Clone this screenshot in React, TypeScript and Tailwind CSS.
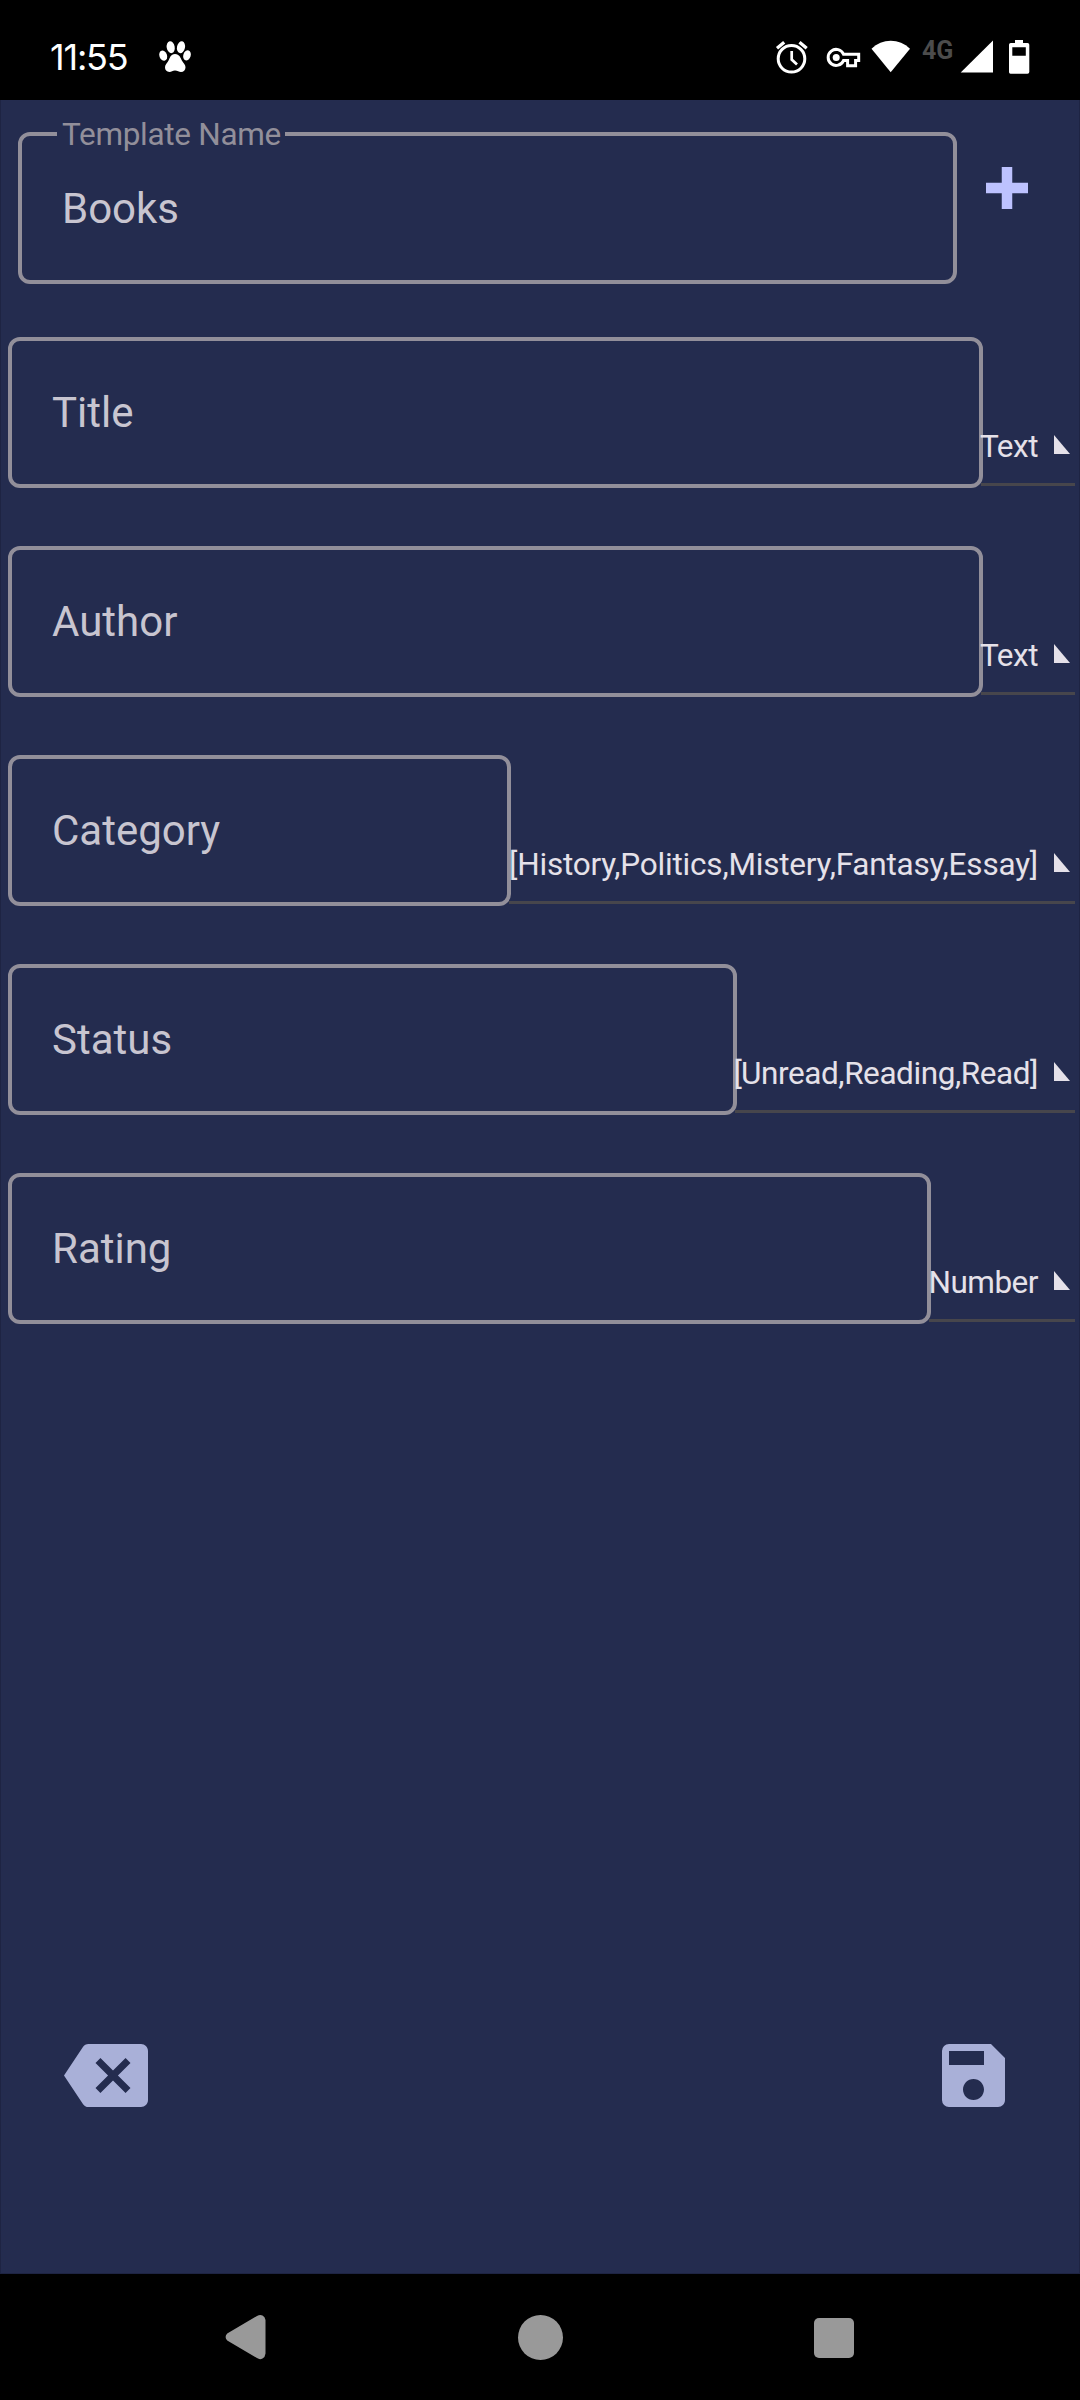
import React from "react";

const fields = [
  { name: "Title", type: "Text", size: "w-[94px] tracking-[-0.5px]" },
  { name: "Author", type: "Text", size: "w-[94px] tracking-[-0.5px]" },
  {
    name: "Category",
    type: "[History,Politics,Mistery,Fantasy,Essay]",
    size: "w-[566px] tracking-[-0.2px]",
  },
  { name: "Status", type: "[Unread,Reading,Read]", size: "w-[340px] tracking-[-0.42px]" },
  { name: "Rating", type: "Number", size: "w-[146px] tracking-[-0.5px]" },
];

function StatusBar() {
  return (
    <header className="flex h-[100px] items-start bg-black text-white">
      <div className="mt-[33px] ml-[50px] w-[107px] whitespace-nowrap font-['Inter'] text-[36px] leading-[48px] tracking-[-1.2px]">
        11:55
      </div>
      <svg className="mt-[40px] h-[34px] w-[36px]" viewBox="0 0 36 34" fill="currentColor">
        <ellipse cx="13.7" cy="7.2" rx="4" ry="6" transform="rotate(-10 13.7 7.2)" />
        <ellipse cx="24" cy="7.2" rx="4" ry="6" transform="rotate(12 24 7.2)" />
        <ellipse cx="6.2" cy="15.6" rx="3.8" ry="5.2" transform="rotate(-20 6.2 15.6)" />
        <ellipse cx="30" cy="15.4" rx="3.7" ry="5.2" transform="rotate(18 30 15.4)" />
        <path d="M18 14c4.500 0 5.500 4 7 6.800 1.500 2.400 3.500 4 3.500 6.500 0 3-2 4.700-4.500 4.700-2 0-3.500-1.500-6-1.500s-3.500 1.500-5.500 1.500c-3 0-4.500-2-4.500-4.700 0-2.500 2-4.100 3.400-6.500C13 18 13.500 14 18 14z" />
      </svg>
      <div className="mt-[40px] ml-auto mr-[50px] flex h-[34px]">
        <svg className="h-[34px] w-[34px]" viewBox="0 0 34 34" fill="none" stroke="currentColor">
          <circle cx="16.500" cy="18.800" r="13.300" strokeWidth="3" />
          <path d="M16.700 11v8.600l5.300 5" strokeWidth="2.700" />
          <path d="M2 8.200L9.200 2.200M24.500 2.200L31.700 8.200" strokeWidth="3.300" />
        </svg>
        <svg className="ml-[16px] h-[34px] w-[36px]" viewBox="0 0 36 34" fill="none" stroke="currentColor">
          <path d="M18.500 14.200H33.700V20.600H30.600V25.700H22.600V20.600H18.500A8 8 0 1 1 18.500 14.200Z" strokeWidth="3" />
          <circle cx="11.200" cy="17.500" r="3.500" fill="currentColor" stroke="none" />
        </svg>
        <svg className="ml-[10px] h-[34px] w-[40px]" viewBox="0 0 40 34" fill="currentColor">
          <path d="M.5 8.700C11-2 28.500-2 39 8.700L19.700 32.300z" />
        </svg>
        <span className="ml-[11px] w-[32px] whitespace-nowrap font-['Roboto'] text-[25px] leading-[21px] font-bold text-[#4c4c4c]">
          4G
        </span>
        <svg className="ml-[6px] h-[34px] w-[34px]" viewBox="0 0 34 34" fill="currentColor">
          <path d="M33 .5V32.500H.7z" />
        </svg>
        <svg className="ml-[14px] h-[34px] w-[22px]" viewBox="0 0 22 34" fill="currentColor" fillRule="evenodd">
          <path d="M7 0h8v3h4.500a1.800 1.800 0 0 1 1.800 1.800V32a1.800 1.800 0 0 1-1.800 1.800h-17A1.800 1.800 0 0 1 1 32V4.800A1.800 1.800 0 0 1 2.800 3H7zM4.300 7.300v8.500h13.500V7.300z" />
        </svg>
      </div>
    </header>
  );
}

function FieldRow({ name, type, size }: { name: string; type: string; size: string }) {
  return (
    <div className="flex h-[151px]">
      <div className="flex min-w-0 flex-1 items-center rounded-[12px] border-4 border-[#928f9a] pl-[40px] text-[42px] leading-[50px] text-[#c8c5d0]">
        {name}
      </div>
      <div
        className={`relative mb-[2px] -ml-[2px] flex shrink-0 items-end justify-end border-b-[3px] border-[#47464c] pb-[18px] text-[31.5px] leading-[37px] text-[#e5e1e9] ${size}`}
      >
        <span className="whitespace-nowrap">{type}</span>
        <svg className="mb-[11px] ml-[16px] mr-[5px] h-[19px] w-[16px] shrink-0" viewBox="0 0 16 19" fill="currentColor">
          <path d="M0 0L16 19H0z" />
        </svg>
      </div>
    </div>
  );
}

export default function App() {
  return (
    <div className="flex h-[2400px] w-[1080px] flex-col bg-black font-['Roboto',sans-serif]">
      <StatusBar />
      <main className="flex flex-1 flex-col border-x border-b border-[#1e2443] bg-[#242c4f]">
        <div className="flex pt-[32px] pl-[17px]">
          <div className="relative flex h-[152px] w-[939px] items-center rounded-[12px] border-4 border-[#928f9a] pt-[1px] pl-[40px] text-[42px] leading-[50px] text-[#c8c5d0]">
            <span className="absolute -top-[20px] left-[35px] w-[228px] bg-[#242c4f] pl-[5px] text-[31.5px] leading-[37px] tracking-[-0.3px] whitespace-nowrap text-[#928f9a]">
              Template Name
            </span>
            Books
          </div>
          <svg className="mt-[35px] ml-[29px] h-[42px] w-[42px]" viewBox="0 0 42 42" fill="#bdc2ff">
            <path d="M15.750 0h10.500v15.750H42v10.500H26.250V42h-10.500V26.250H0v-10.500h15.750z" />
          </svg>
        </div>
        <div className="mt-[53px] flex flex-col gap-[58px] pr-[4px] pl-[7px]">
          {fields.map((f) => (
            <FieldRow key={f.name} name={f.name} type={f.type} size={f.size} />
          ))}
        </div>
        <div className="mt-auto mb-[155px] flex justify-between pr-[63px] pl-[63px] text-[#a9b0d8]">
          <svg className="h-[84px] w-[84px]" viewBox="0 0.143 24 24" fill="currentColor">
            <path d="M22 3H7c-.69 0-1.230.35-1.590.88L0 12l5.410 8.110c.36.53.9.89 1.590.89h15c1.100 0 2-.9 2-2V5c0-1.100-.9-2-2-2zm-3 12.590L17.590 17 14 13.410 10.410 17 9 15.590 12.590 12 9 8.410 10.410 7 14 10.590 17.590 7 19 8.410 15.410 12 19 15.590z" />
          </svg>
          <svg className="h-[84px] w-[84px]" viewBox="0.143 0.143 24 24" fill="currentColor">
            <path d="M17 3H5a2 2 0 0 0-2 2v14a2 2 0 0 0 2 2h14c1.100 0 2-.9 2-2V7l-4-4zm-5 16c-1.660 0-3-1.340-3-3s1.340-3 3-3 3 1.340 3 3-1.340 3-3 3zm3-10H5V5h10v4z" />
          </svg>
        </div>
      </main>
      <nav className="flex h-[126px] items-center bg-black text-[#999999]">
        <svg className="ml-[225px] h-[46px] w-[42px]" viewBox="0 0 42 46" fill="currentColor">
          <path d="M2.200 19.500L32 2Q35 .3 37.500 1.500T40.500 6V39.500Q40.200 43 37.500 44.500T32 44L2.200 26.500Q-1 23 2.200 19.500z" />
        </svg>
        <div className="ml-[251px] h-[45px] w-[45px] rounded-full bg-[#999999]" />
        <div className="mt-[1px] ml-[251px] h-[40px] w-[40px] rounded-[5px] bg-[#999999]" />
      </nav>
    </div>
  );
}
